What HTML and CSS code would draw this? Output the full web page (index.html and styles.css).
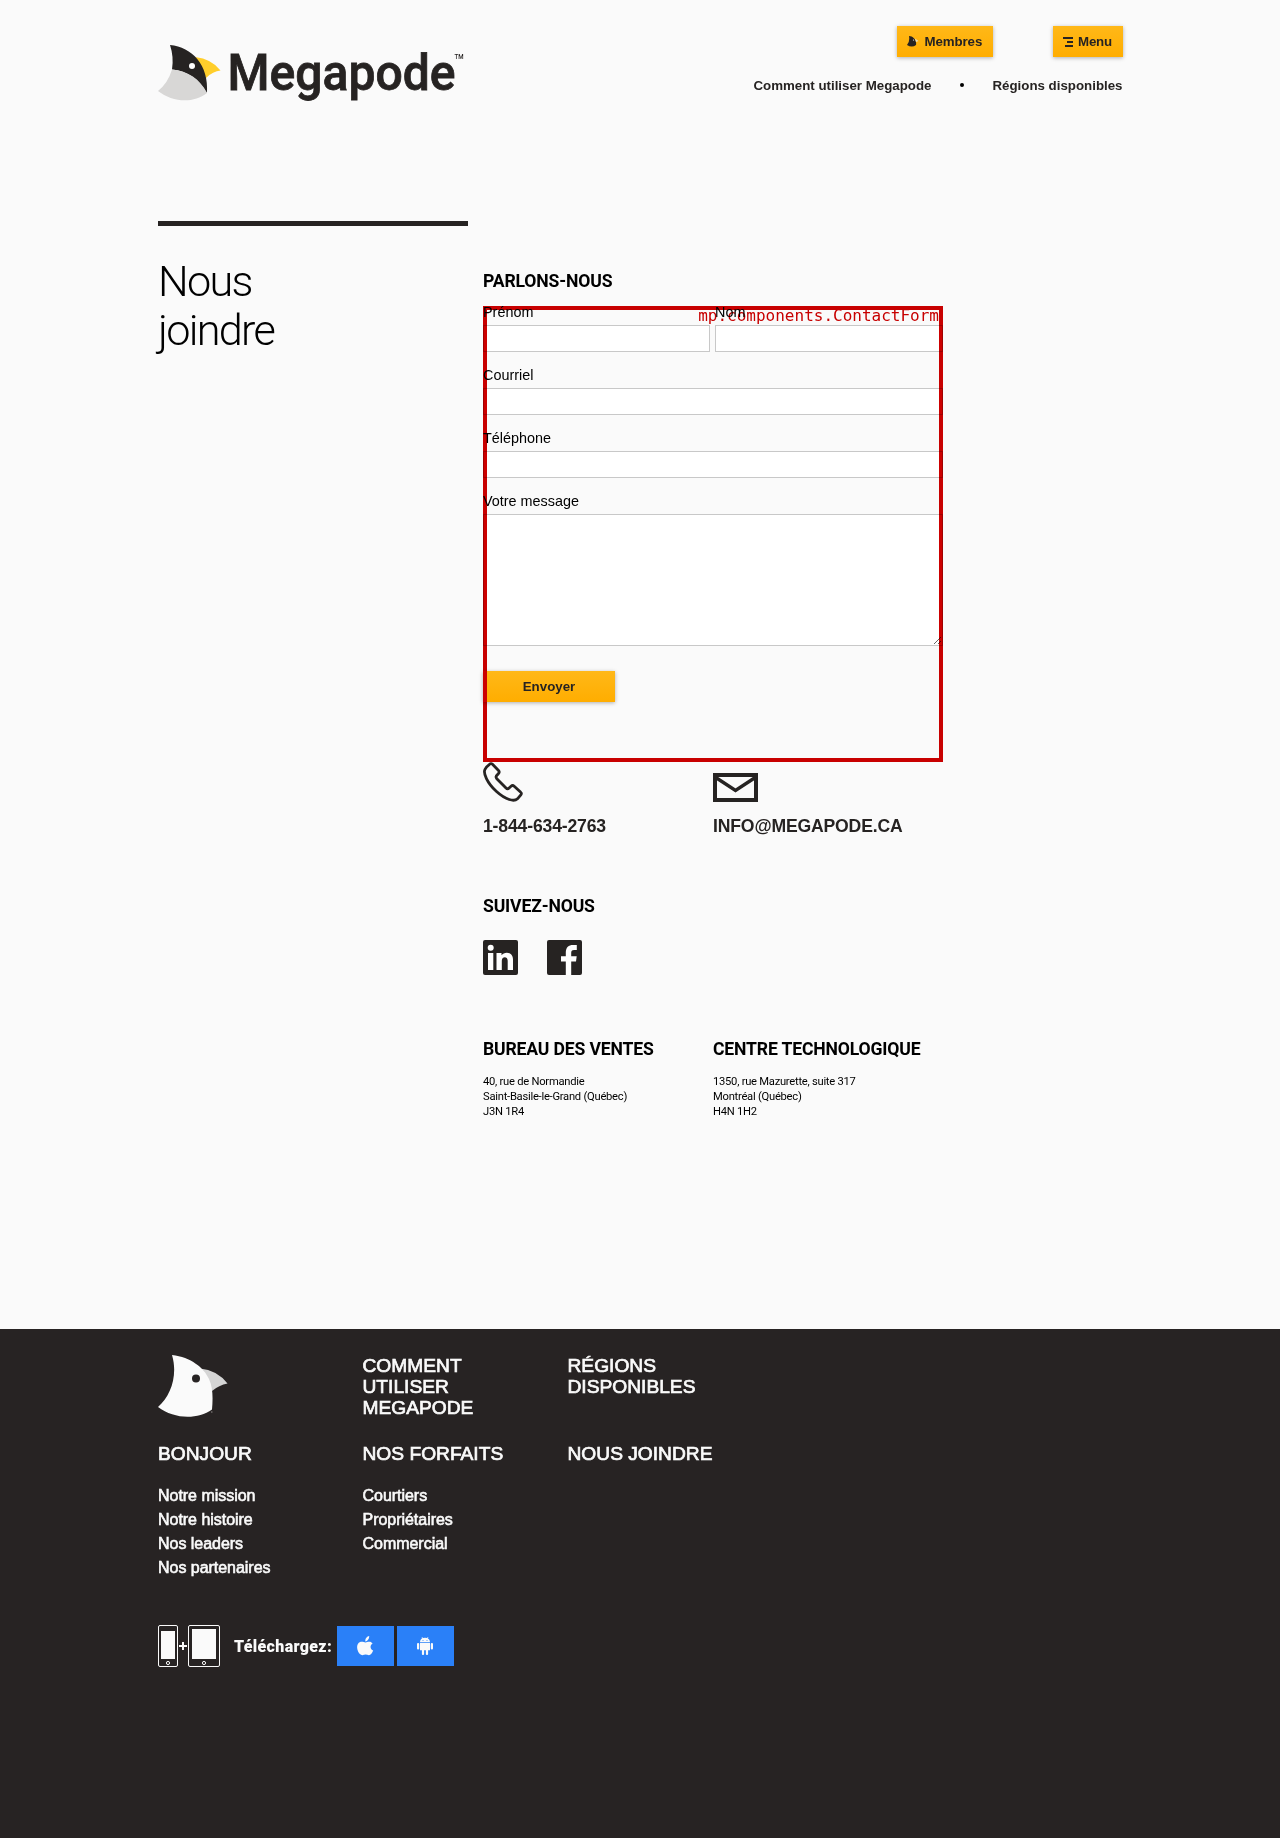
FILE: index.html
```html
<!DOCTYPE html>
<html lang="fr">
<head>
<meta charset="utf-8">
<title>Megapode - Nous joindre</title>
<link rel="stylesheet" href="styles.css">
</head>
<body>
<header class="wrap header">
  <a class="logo" aria-label="Megapode">
    <svg width="310" height="64" viewBox="0 0 310 64">
      <path fill="#ffce2b" d="M37 12Q54 14 62.500 25.500Q55 26 48 33Z"/>
      <path fill="#262322" d="M12 0C34 2 51 20 49 48C40 33 29 26 14 24.500Q16 12 12 0Z"/>
      <path fill="#d8d7d6" d="M14 24.500C30 26 42 34 49 48C35 59 14 57 0 46Q10 38 14 24.500Z"/>
      <circle cx="34" cy="21" r="3" fill="#fff"/>
      <text class="logo-name" x="69.500" y="45" textLength="228" lengthAdjust="spacingAndGlyphs">Megapode</text>
      <text class="logo-tm" x="296.500" y="13.500" textLength="9" lengthAdjust="spacingAndGlyphs">TM</text>
    </svg>
  </a>
  <div class="header-right">
    <div class="header-buttons">
      <button class="btn btn-members"><svg width="12" height="11" viewBox="0 0 12 11"><path fill="#262322" d="M2 0C6 0 10 4 9 9Q5 12 0 9Q3 6 2 0Z"/><path fill="#e8dcc0" d="M8 2.500L11.500 5L9 6Z"/><circle cx="6.500" cy="4" r=".6" fill="#fff"/></svg>Membres</button>
      <button class="btn btn-menu"><svg width="10" height="10" viewBox="0 0 10 10"><path fill="#262322" d="M0 0h10v2H0zM4 4h6v2H4zM2 8h8v2H2z"/></svg>Menu</button>
    </div>
    <nav class="header-nav"><a>Comment utiliser Megapode</a><span class="dot"></span><a>Régions disponibles</a></nav>
  </div>
</header>
<main class="wrap main">
  <h1 class="title">Nous<br>joindre</h1>
  <div class="content">
    <h2 class="heading">PARLONS-NOUS</h2>
    <form class="form">
      <div class="form-row">
        <label class="field"><span class="label">Prénom</span><input class="input" type="text"></label>
        <label class="field"><span class="label">Nom</span><input class="input" type="text"></label>
      </div>
      <label class="field"><span class="label">Courriel</span><input class="input" type="text"></label>
      <label class="field"><span class="label">Téléphone</span><input class="input" type="text"></label>
      <label class="field"><span class="label">Votre message</span><textarea class="input message"></textarea></label>
      <button class="btn btn-send" type="button">Envoyer</button>
      <div class="outline"><span class="outline-name">mp.components.ContactForm</span></div>
    </form>
    <div class="pair contact">
      <a class="contact-item">
        <svg width="40" height="40" viewBox="0 0 40 40" fill="none" stroke="#262322" stroke-width="2.800" stroke-linejoin="round"><path d="M6.500 2.300Q8 1 9.500 2.300L15.500 8.500Q17 10 15.500 11.500L13.300 14Q12.600 15.500 13.800 16.700L23 26Q24.500 27.500 25.800 26.300L28 24.200Q29.600 22.800 31.200 24.200L37.500 30Q39.300 31.500 37.600 33.200L34.500 36.800C31 40 23 38 13.500 29.500C4 21 0 11 2 7.300Q3.500 4.500 6.500 2.300Z"/></svg>
        <span>1-844-634-2763</span>
      </a>
      <a class="contact-item">
        <svg width="45" height="29" viewBox="0 0 45 29" fill="none" stroke="#262322" stroke-width="4"><path d="M2 2h41v25H2z"/><path d="M2 4L22.500 17.500L43 4" stroke-width="3.400"/></svg>
        <span>INFO@MEGAPODE.CA</span>
      </a>
    </div>
    <h2 class="heading heading-follow">SUIVEZ-NOUS</h2>
    <div class="social">
      <svg width="35" height="35" viewBox="0 0 35 35"><rect width="35" height="35" rx="2" fill="#262322"/><g fill="#fff"><circle cx="7.700" cy="7.700" r="3"/><path d="M5 13h5.300v17H5zM13.500 13h5v2.300c3-4.300 11.500-3.500 11.500 4.200V30h-5.300v-9.300c0-4.700-5.900-4.400-5.900 0V30h-5.300z"/></g></svg>
      <svg width="35" height="35" viewBox="0 0 35 35"><rect width="35" height="35" rx="2" fill="#262322"/><path fill="#fff" d="M18.800 35V21.500H14v-5.200h4.800v-3.500c0-5.500 3-7.700 7-7.700h4v5h-2.700c-2.300 0-2.900 1-2.900 2.900v3.300h5.500l-.7 5.200h-4.800V35z"/></svg>
    </div>
    <div class="pair offices">
      <div><h2 class="heading">BUREAU DES VENTES</h2><p class="address">40, rue de Normandie<br>Saint-Basile-le-Grand (Québec)<br>J3N 1R4</p></div>
      <div><h2 class="heading">CENTRE TECHNOLOGIQUE</h2><p class="address">1350, rue Mazurette, suite 317<br>Montréal (Québec)<br>H4N 1H2</p></div>
    </div>
  </div>
</main>
<footer class="footer">
  <div class="wrap">
    <div class="foot-grid foot-top">
      <svg width="72" height="64" viewBox="0 0 72 64"><path fill="#d5d5d5" d="M42 13.500Q59 15 69.500 28.500Q61 30 54 36Z"/><path fill="#fafafa" d="M14 0C33 2 46 13 51 24C55 33 55 43 54 54.500C39 65 16 64 0 52C13 41 20 20 14 0Z"/><circle cx="38" cy="23.500" r="4" fill="#272323"/><path fill="#8f8c8c" d="M53 56.500h1.500v1H53z"/></svg>
      <a class="foot-head">COMMENT<br>UTILISER<br>MEGAPODE</a>
      <a class="foot-head">RÉGIONS<br>DISPONIBLES</a>
    </div>
    <div class="foot-grid foot-links">
      <div><a class="foot-head">BONJOUR</a><ul class="links"><li>Notre mission</li><li>Notre histoire</li><li>Nos leaders</li><li>Nos partenaires</li></ul></div>
      <div><a class="foot-head">NOS FORFAITS</a><ul class="links"><li>Courtiers</li><li>Propriétaires</li><li>Commercial</li></ul></div>
      <div><a class="foot-head">NOUS JOINDRE</a></div>
    </div>
    <div class="download">
      <svg width="62" height="42" viewBox="0 0 62 42"><g fill="none" stroke="#fafafa"><rect x=".5" y=".5" width="19" height="41" rx="1.500"/><rect x="30.500" y=".5" width="31" height="41" rx="1.500"/><circle cx="10" cy="38" r="1.600"/><circle cx="46" cy="38" r="1.600"/></g><path fill="#fafafa" d="M3 6h14v28H3zM34 4h24v30H34zM21 20h8v2h-8zM24 17h2v8h-2z"/></svg>
      <strong class="download-label">Téléchargez:</strong>
      <a class="store" aria-label="App Store"><svg width="17" height="20" viewBox="0 0 17 20" fill="#fafafa"><path d="M8.300 5.500C8 2.500 9.700.6 12.200 0C12.400 2.800 10.700 5 8.300 5.500ZM8.600 6.500C10 6.500 13 4.300 15.600 7.500C12.600 9.400 13 13.200 16.200 14.600C14.500 19 12.600 19.800 10.300 18.800Q8.600 18.100 7 18.800C4.200 20 2.400 18 1.100 15.500C-.8 11.500.1 7.300 3.100 6.100C5.300 5.200 7 6.500 8.600 6.500Z"/></svg></a>
      <a class="store" aria-label="Google Play"><svg width="16" height="18" viewBox="0 0 16 18" fill="#fafafa"><path d="M3 5.300C3 3 4.100 1.800 5.300 1.200L4.500 0L5 0L6 1Q8 .3 10 1L11 0L11.500 0L10.700 1.200C12 1.900 13 3.300 13 5.300ZM3 6h10v7.300H3z"/><rect y="6" width="2.200" height="6.500" rx="1"/><rect x="13.800" y="6" width="2.200" height="6.500" rx="1"/><rect x="4.900" y="12" width="2.200" height="6" rx="1"/><rect x="8.900" y="12" width="2.200" height="6" rx="1"/><g fill="#2a80f8"><circle cx="6" cy="3.400" r=".5"/><circle cx="10" cy="3.400" r=".5"/></g></svg></a>
    </div>
  </div>
</footer>
</body>
</html>
```
FILE: styles.css
```css
* { box-sizing: border-box; }
body {
  margin: 0;
  display: flex;
  flex-direction: column;
  min-height: 1838px;
  background: #fafafa;
  color: #000;
  font-family: "Liberation Sans", Arial, sans-serif;
}
svg { display: block; }
.wrap { width: 965px; margin-left: 158px; }

.header { display: flex; justify-content: space-between; height: 221px; }
.logo { padding-top: 45px; }
.logo svg { overflow: visible; }
.logo-name { font: 500 50.500px Roboto, sans-serif; fill: #262322; stroke: #262322; stroke-width: .8px; }
.logo-tm { font: 500 7px Roboto, sans-serif; fill: #262322; }
.header-right { padding-top: 26px; }
.header-buttons { display: flex; justify-content: flex-end; gap: 60px; }
.btn {
  display: flex;
  align-items: center;
  height: 31px;
  padding: 0 10px;
  border: 0;
  background: linear-gradient(#ffb818, #ffad00);
  box-shadow: 0 1px 4px rgba(0, 0, 0, .3);
  color: #262322;
  font: bold 13.300px "Liberation Sans", Arial, sans-serif;
}
.btn-members { width: 96px; gap: 5.500px; letter-spacing: -.1px; }
.btn-menu { width: 70px; gap: 5px; letter-spacing: -.2px; }
.header-nav {
  display: flex;
  justify-content: flex-end;
  align-items: center;
  margin-top: 21px;
  padding-right: .5px;
  line-height: 16px;
  font-size: 13.300px;
  font-weight: bold;
  color: #262322;
}
.dot { width: 4px; height: 4px; margin: 0 28.500px 3px; border-radius: 2px; background: #000; }

.main { display: flex; gap: 15px; height: 1108px; }
.title {
  width: 310px;
  margin: 0;
  padding-top: 32px;
  border-top: 5px solid #262322;
  font: 300 43.200px/48.500px Roboto, sans-serif;
  letter-spacing: -1.700px;
  height: 140px;
}
.content { width: 460px; padding-top: 50px; }
.heading { margin: 0; font: bold 17.600px/20px Roboto, sans-serif; letter-spacing: -.160px; white-space: nowrap; }
.form { position: relative; height: 456px; margin-top: 15px; }
.form-row { display: grid; grid-template-columns: 227px 228px; gap: 5px; }
.field { display: block; height: 63px; font-size: 14.400px; }
.label { display: block; height: 19px; line-height: 13px; }
.form > .field:nth-of-type(3) { height: 147px; }
.input {
  display: block;
  width: 100%;
  height: 27px;
  margin: 0;
  border: 1px solid #c8c8c8;
  background: #fff;
}
.message { height: 132px; resize: vertical; }
.form > .btn-send { width: 132px; margin-top: 29px; justify-content: center; }
.outline { position: absolute; inset: 0; border: 4px solid #cc0000; mix-blend-mode: multiply; pointer-events: none; }
.outline-name {
  position: absolute;
  top: 0;
  right: 0;
  color: #cc0000;
  font: 16px/12px "DejaVu Sans Mono", monospace;
}
.pair { display: grid; grid-template-columns: 230px 230px; }
.contact-item {
  display: flex;
  flex-direction: column;
  justify-content: flex-end;
  gap: 14px;
  height: 74px;
  color: #262322;
  font-size: 17.600px;
  font-weight: bold;
  line-height: 20px;
  letter-spacing: -.160px;
}
.heading-follow { margin-top: 60px; }
.social { display: flex; gap: 29px; margin-top: 24px; }
.offices { margin-top: 64px; }
.address { margin: 15px 0 0; font: 11.200px/15px Roboto, sans-serif; letter-spacing: -.250px; }

.footer { flex: 1; padding-top: 26px; background: #272323; color: #fafafa; }
.foot-grid { display: grid; grid-template-columns: 204.500px 205px 205px; }
.foot-top { height: 88px; }
.foot-head { display: block; font-size: 19.200px; line-height: 21px; -webkit-text-stroke: .7px #fafafa; }
.foot-links { height: 182px; }
.links { margin: 20px 0 0; padding: 0; list-style: none; font-size: 16px; line-height: 24px; letter-spacing: -.030px; -webkit-text-stroke: .6px #fafafa; }
.download { display: flex; align-items: center; }
.download-label { width: 102.500px; margin-left: 14px; padding-top: 2px; font: 900 16px/20px Roboto, sans-serif; letter-spacing: .340px; }
.store { display: flex; align-items: center; justify-content: center; width: 57px; height: 40px; margin-right: 3px; background: #2a80f8; }
```
